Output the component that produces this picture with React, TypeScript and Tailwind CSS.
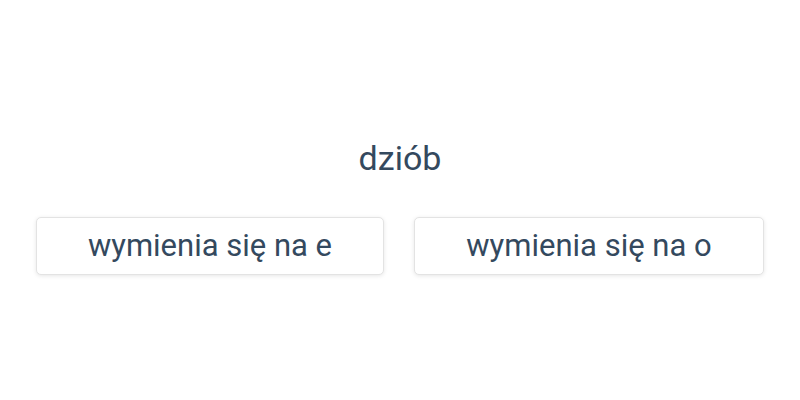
export default function App() {
  return (
    <div
      className="w-[800px] h-[400px] bg-white flex flex-col items-center pt-[134px] text-[#34495e]"
      style={{ fontFamily: "Roboto, 'Noto Sans', sans-serif" }}
    >
      <div className="text-[34px] leading-[48px]">dziób</div>
      <div className="mt-[35px] flex gap-[30px]">
        <button className="w-[348px] h-[58px] bg-white border border-[#e3e3e3] rounded-[5px] shadow-[0_1px_4px_rgba(0,0,0,0.10)] text-[31px] text-[#34495e] flex items-center justify-center">
          wymienia się na e
        </button>
        <button className="w-[350px] h-[58px] bg-white border border-[#e3e3e3] rounded-[5px] shadow-[0_1px_4px_rgba(0,0,0,0.10)] text-[31px] text-[#34495e] flex items-center justify-center">
          wymienia się na o
        </button>
      </div>
    </div>
  );
}
